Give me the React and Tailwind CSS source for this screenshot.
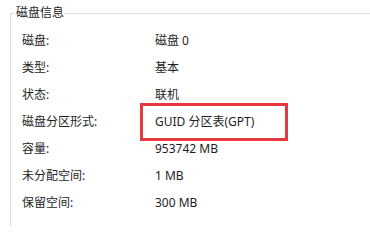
import React from "react";

const rows = [
  ["磁盘:", "磁盘 0"],
  ["类型:", "基本"],
  ["状态:", "联机"],
  ["磁盘分区形式:", "GUID 分区表(GPT)", true],
  ["容量:", "953742 MB"],
  ["未分配空间:", "1 MB"],
  ["保留空间:", "300 MB"],
];

export default function App() {
  return (
    <div
      className="w-[370px] h-[226px] bg-white overflow-hidden text-[12px] text-[#1e1e1e]"
      style={{ fontFamily: '"Noto Sans", "Noto Sans CJK SC", sans-serif' }}
    >
      <fieldset className="ml-[10px] mt-[4px] h-[300px] border-l border-t border-[#dcdcdc]">
        <legend className="ml-[4px] px-px leading-[18px]">磁盘信息</legend>
        <div className="pl-[11px] pt-[5.5px]">
          {rows.map(([label, value, marked]) => (
            <div key={label} className="grid grid-cols-[133px_1fr] h-[27px] items-center">
              <span>{label}</span>
              <span className="relative">
                {value}
                {marked && (
                  <span className="absolute left-[-15px] top-[-10px] w-[148px] h-[38px] border-[3px] border-[#e5393f]" />
                )}
              </span>
            </div>
          ))}
        </div>
      </fieldset>
    </div>
  );
}
